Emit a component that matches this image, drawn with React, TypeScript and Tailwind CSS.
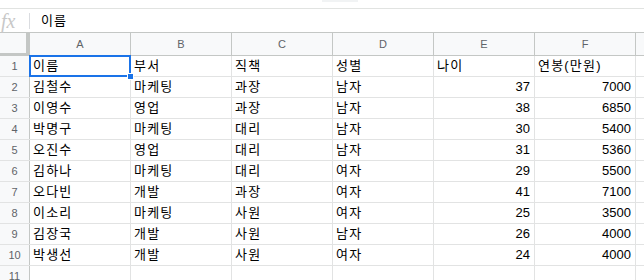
import React from "react";

const cols = ["A", "B", "C", "D", "E", "F"];
const rows: (string | number)[][] = [
  ["이름", "부서", "직책", "성별", "나이", "연봉(만원)"],
  ["김철수", "마케팅", "과장", "남자", 37, 7000],
  ["이영수", "영업", "과장", "남자", 38, 6850],
  ["박명구", "마케팅", "대리", "남자", 30, 5400],
  ["오진수", "영업", "대리", "남자", 31, 5360],
  ["김하나", "마케팅", "대리", "여자", 29, 5500],
  ["오다빈", "개발", "과장", "여자", 41, 7100],
  ["이소리", "마케팅", "사원", "여자", 25, 3500],
  ["김장국", "개발", "사원", "남자", 26, 4000],
  ["박생선", "개발", "사원", "여자", 24, 4000],
  ["", "", "", "", "", ""],
];

const font = { fontFamily: '"Liberation Sans", Arial, "Noto Sans CJK KR", sans-serif' };

export default function App() {
  return (
    <div className="w-[644px] h-[280px] overflow-hidden bg-white text-black" style={font}>
      <div className="relative h-[8px]">
        <div className="absolute left-[322px] top-0 h-[2px] w-[36px] bg-[#f1f3f4]" />
      </div>
      <div className="flex h-[24px] items-center border-t border-[#e1e3e1]">
        <div className="flex w-[29px] items-center pl-[1px] text-[20px] italic leading-none text-[#c8c8c8]" style={{ fontFamily: '"Liberation Serif", serif' }}>
          fx
        </div>
        <div className="h-[16px] w-px bg-[#dadce0]" />
        <div className="pl-[11px] text-[13px] tracking-[1px]">이름</div>
      </div>
      <div className="flex h-[24px] border-y border-[#c4c7c5] bg-[#f8f9fa]">
        <div className="w-[30px] shrink-0 border-r-[4px] border-b-[3px] border-[#c4c7c5] -mb-[1px] box-border" />
        {cols.map((c) => (
          <div key={c} className="flex w-[101px] shrink-0 items-center justify-center border-r border-[#c4c7c5] text-[11px] text-[#5f6368]">
            {c}
          </div>
        ))}
        <div className="flex-1" />
      </div>
      <div className="relative">
        {rows.map((r, i) => (
          <div key={i} className="flex h-[21px] border-b border-[#e2e3e3]">
            <div className="flex w-[30px] shrink-0 items-center justify-center border-r border-[#c4c7c5] bg-[#f8f9fa] text-[11px] text-[#5f6368]">
              {i + 1}
            </div>
            {r.map((v, j) =>
              typeof v === "number" ? (
                <div key={j} className="flex w-[101px] shrink-0 items-center justify-end border-r border-[#e2e3e3] pl-[3px] pr-[4px] text-[13px]">
                  {v}
                </div>
              ) : (
                <div key={j} className="flex w-[101px] shrink-0 items-center justify-start border-r border-[#e2e3e3] px-[3px] text-[13px] tracking-[1.2px]">
                  {v}
                </div>
              )
            )}
            <div className="flex-1" />
          </div>
        ))}
        <div className="pointer-events-none absolute left-[29px] top-[-1px] h-[22px] w-[102px] border-2 border-[#1a73e8]" />
        <div className="absolute left-[127px] top-[17px] h-[7px] w-[7px] border border-white bg-[#1a73e8]" />
      </div>
    </div>
  );
}
